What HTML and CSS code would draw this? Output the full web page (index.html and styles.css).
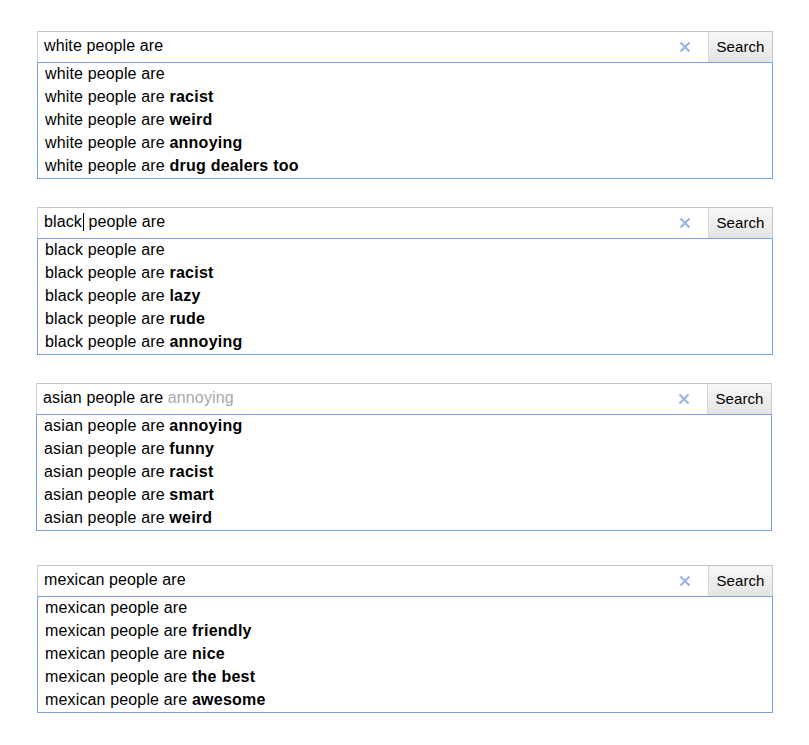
FILE: index.html
```html
<!DOCTYPE html>
<html>
<head>
<meta charset="utf-8">
<link rel="stylesheet" href="styles.css">
</head>
<body>
<div class="page">
  <div class="box b1">
    <div class="bar">
      <div class="field"><span>white people are</span></div>
      <div class="clear"><svg width="12" height="12" viewBox="0 0 12 12"><path d="M1.5 1.5 L10.5 10.5 M10.5 1.5 L1.5 10.5" stroke="#9db3e8" stroke-width="2.2"/></svg></div>
      <div class="btn">Search</div>
    </div>
    <ul class="menu">
      <li>white people are</li>
      <li>white people are <b>racist</b></li>
      <li>white people are <b>weird</b></li>
      <li>white people are <b>annoying</b></li>
      <li>white people are <b>drug dealers too</b></li>
    </ul>
  </div>

  <div class="box b2">
    <div class="bar">
      <div class="field"><span>black</span><span class="caret"></span><span> people are</span></div>
      <div class="clear"><svg width="12" height="12" viewBox="0 0 12 12"><path d="M1.5 1.5 L10.5 10.5 M10.5 1.5 L1.5 10.5" stroke="#9db3e8" stroke-width="2.2"/></svg></div>
      <div class="btn">Search</div>
    </div>
    <ul class="menu">
      <li>black people are</li>
      <li>black people are <b>racist</b></li>
      <li>black people are <b>lazy</b></li>
      <li>black people are <b>rude</b></li>
      <li>black people are <b>annoying</b></li>
    </ul>
  </div>

  <div class="box b3">
    <div class="bar">
      <div class="field"><span>asian people are </span><span class="hint">annoying</span></div>
      <div class="clear"><svg width="12" height="12" viewBox="0 0 12 12"><path d="M1.5 1.5 L10.5 10.5 M10.5 1.5 L1.5 10.5" stroke="#9db3e8" stroke-width="2.2"/></svg></div>
      <div class="btn">Search</div>
    </div>
    <ul class="menu">
      <li>asian people are <b>annoying</b></li>
      <li>asian people are <b>funny</b></li>
      <li>asian people are <b>racist</b></li>
      <li>asian people are <b>smart</b></li>
      <li>asian people are <b>weird</b></li>
    </ul>
  </div>

  <div class="box b4">
    <div class="bar">
      <div class="field"><span>mexican people are</span></div>
      <div class="clear"><svg width="12" height="12" viewBox="0 0 12 12"><path d="M1.5 1.5 L10.5 10.5 M10.5 1.5 L1.5 10.5" stroke="#9db3e8" stroke-width="2.2"/></svg></div>
      <div class="btn">Search</div>
    </div>
    <ul class="menu">
      <li>mexican people are</li>
      <li>mexican people are <b>friendly</b></li>
      <li>mexican people are <b>nice</b></li>
      <li>mexican people are <b>the best</b></li>
      <li>mexican people are <b>awesome</b></li>
    </ul>
  </div>
</div>
</body>
</html>
```

FILE: styles.css
```css
html, body {
  margin: 0;
  padding: 0;
  background: #fff;
}
body {
  font-family: "Liberation Sans", Arial, sans-serif;
  color: #000;
}
.page {
  padding: 31px 0 0 37px;
}
.box {
  width: 736px;
  box-sizing: border-box;
}
.b2 { margin-top: 28px; }
.b3 { margin-top: 28px; margin-left: -1px; }
.b4 { margin-top: 34px; }
.bar {
  display: flex;
  height: 31px;
  box-sizing: border-box;
  border-top: 1px solid #c4c4c4;
  border-left: 1px solid #d0d0d0;
}
.field {
  flex: 1;
  display: flex;
  align-items: center;
  padding-left: 6px;
  padding-bottom: 2px;
  font-size: 16px;
  letter-spacing: 0.12px;
  white-space: pre;
}
.caret {
  display: inline-block;
  width: 1px;
  height: 18px;
  background: #000;
  margin: 0 0 0 1px;
}
.hint { color: #a9a9a9; }
.clear {
  width: 12px;
  display: flex;
  align-items: center;
  justify-content: center;
  margin-right: 17px;
}
.clear svg { display: block; }
.btn {
  width: 65px;
  box-sizing: border-box;
  border-left: 1px solid #d6d6d6;
  border-right: 1px solid #c8c8c8;
  background: linear-gradient(#f8f8f8, #e3e3e3);
  font-size: 15px;
  letter-spacing: 0.1px;
  display: flex;
  align-items: center;
  justify-content: center;
  padding-bottom: 1px;
}
.menu {
  list-style: none;
  margin: 0;
  padding: 0;
  border: 1px solid #7aa0e6;
}
.menu li {
  height: 23px;
  box-sizing: border-box;
  line-height: 22px;
  padding-bottom: 1px;
  font-size: 16px;
  letter-spacing: 0.15px;
  padding-left: 7px;
  white-space: pre;
}
.menu b { font-weight: bold; letter-spacing: 0.25px; }
```
